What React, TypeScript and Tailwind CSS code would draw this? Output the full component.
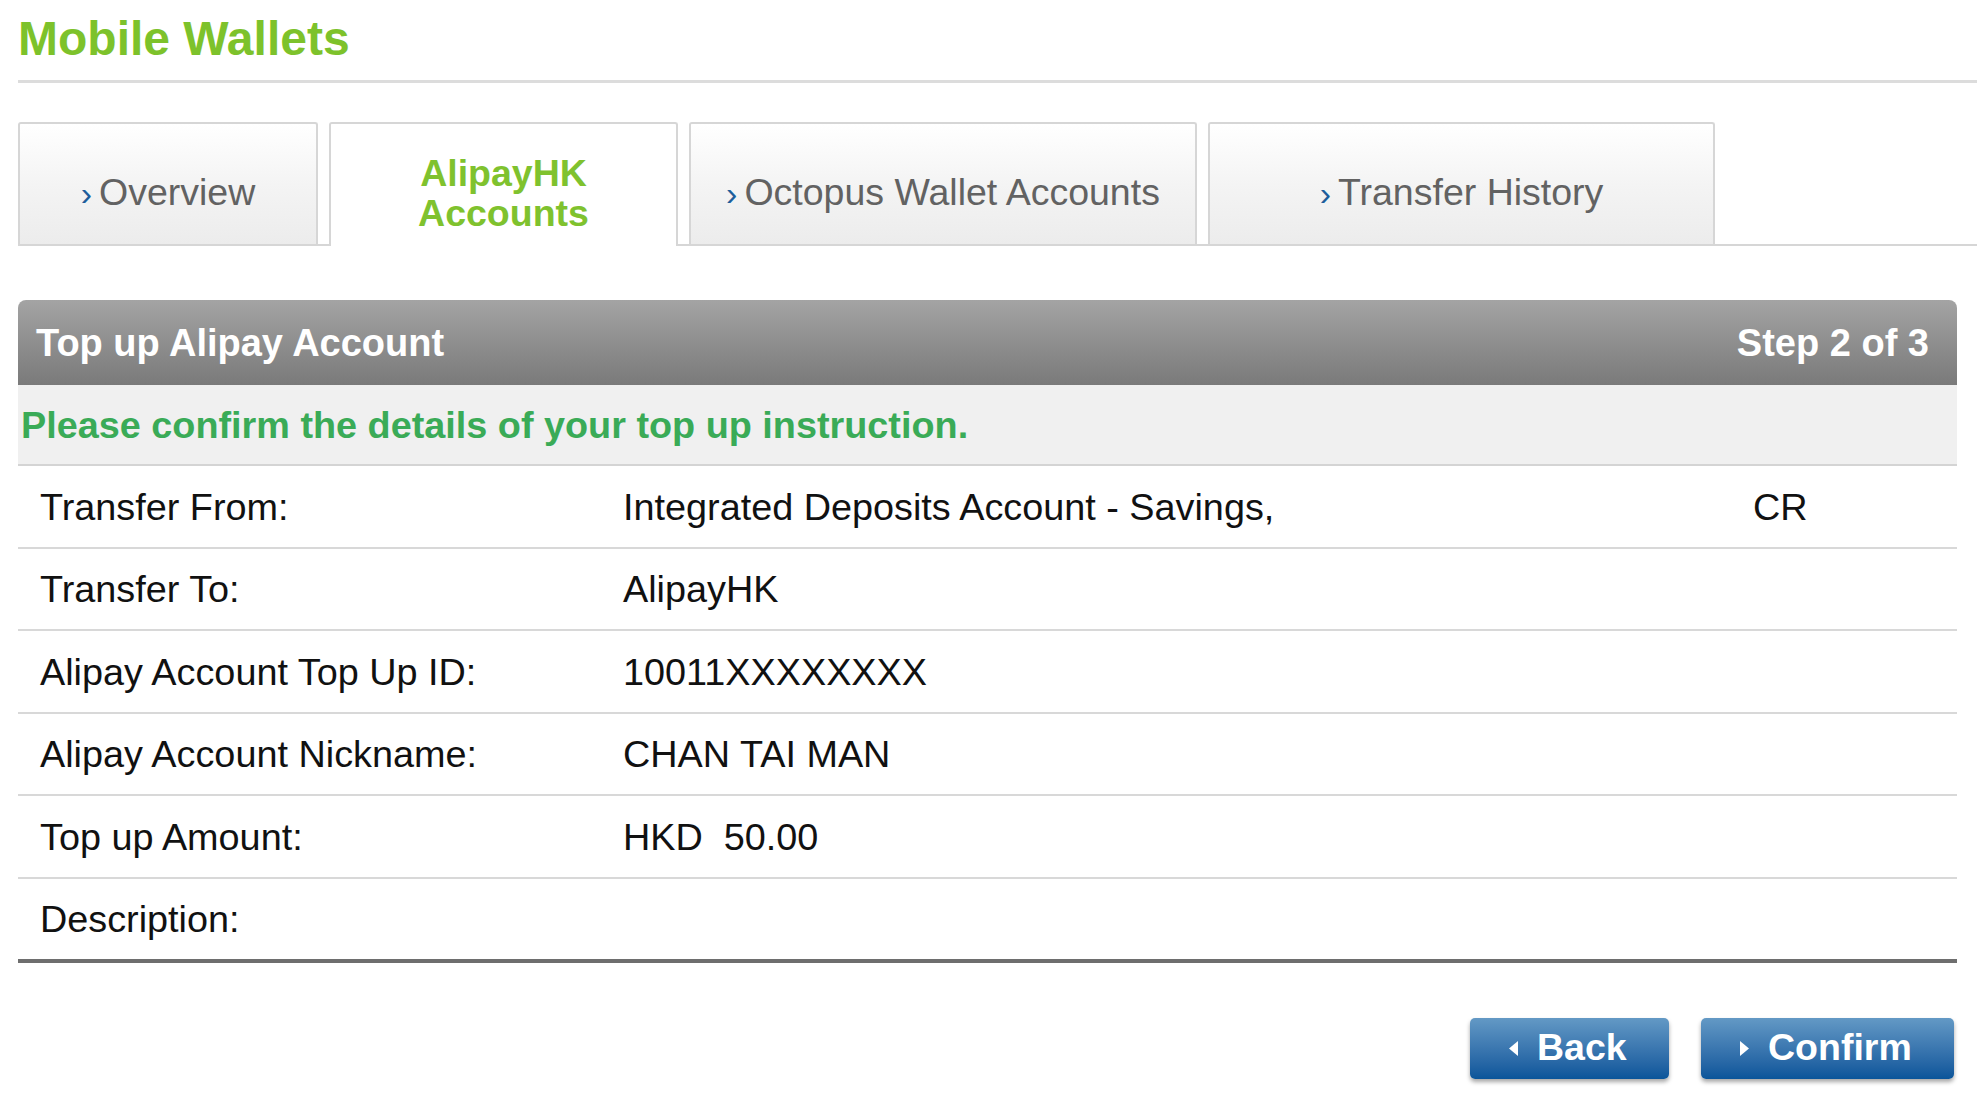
import React from 'react';

interface DetailRow {
  label: string;
  value: string;
  extra?: string;
}

const rows: DetailRow[] = [
  { label: 'Transfer From:', value: 'Integrated Deposits Account - Savings,', extra: 'CR' },
  { label: 'Transfer To:', value: 'AlipayHK' },
  { label: 'Alipay Account Top Up ID:', value: '10011XXXXXXXX' },
  { label: 'Alipay Account Nickname:', value: 'CHAN TAI MAN' },
  { label: 'Top up Amount:', value: 'HKD\u00a0\u00a050.00' },
  { label: 'Description:', value: '' },
];

const tabs = [
  { label: 'Overview', width: 'w-[300px]' },
  { label: 'AlipayHK Accounts', width: 'w-[349px]', active: true },
  { label: 'Octopus Wallet Accounts', width: 'w-[508px]' },
  { label: 'Transfer History', width: 'w-[507px]' },
];

function Triangle({ dir }: { dir: 'left' | 'right' }) {
  return (
    <svg width="9" height="15" viewBox="0 0 9 15" className="shrink-0">
      {dir === 'left' ? <polygon points="9,0 9,15 0,7.5" fill="#fff" /> : <polygon points="0,0 9,7.5 0,15" fill="#fff" />}
    </svg>
  );
}

function ActionButton({ label, dir, width }: { label: string; dir: 'left' | 'right'; width: string }) {
  return (
    <button
      className={`${width} h-[61px] flex items-center gap-[19px] pl-[39px] rounded-[5px] bg-gradient-to-b from-[#6399c5] to-[#09559a] text-white font-bold text-[37.5px] leading-none shadow-[0_3px_4px_rgba(0,0,0,0.35)]`}
    >
      <Triangle dir={dir} />
      <span>{label}</span>
    </button>
  );
}

export default function App() {
  return (
    <div className="min-h-screen bg-white pl-[18px] font-['Liberation_Sans',Arial,sans-serif]">
      {/* Page title */}
      <h1 className="pt-[11px] pb-[13px] text-[48px] leading-[56px] font-bold text-[#7dc22b] border-b-[3px] border-[#dcdcdc]">
        Mobile Wallets
      </h1>

      {/* Tabs */}
      <div className="mt-[41px] flex items-end gap-[11px] border-b-2 border-[#d6d6d6] h-[122px]">
        {tabs.map((tab) =>
          tab.active ? (
            <div
              key={tab.label}
              className={`${tab.width} h-[124px] -mb-[2px] bg-white border-2 border-b-0 border-[#d6d6d6] rounded-t-[3px] flex flex-col items-center justify-center pt-[16px] text-[37.5px] leading-[40px] font-bold text-[#7fc22e]`}
            >
              <span>AlipayHK</span>
              <span>Accounts</span>
            </div>
          ) : (
            <div
              key={tab.label}
              className={`${tab.width} h-[122px] bg-gradient-to-b from-white via-[#f4f4f4] to-[#ececec] border-2 border-b-0 border-[#d6d6d6] rounded-t-[3px] flex items-center justify-center pt-[17px] text-[37.5px] leading-none text-[#626262]`}
            >
              <span className="text-[#1d5e9c] mr-[7px] text-[34px]">›</span>
              <span>{tab.label}</span>
            </div>
          )
        )}
      </div>

      {/* Confirmation panel */}
      <div className="mt-[54px] mr-[20px]">
        <div className="h-[85px] rounded-t-[8px] bg-gradient-to-b from-[#a4a4a4] to-[#7a7a7a] flex items-center justify-between pl-[18px] pr-[28px] text-white font-bold text-[38px] leading-none">
          <span>Top up Alipay Account</span>
          <span>Step 2 of 3</span>
        </div>
        <div className="h-[81px] bg-[#f0f0f0] border-b-2 border-[#d4d4d4] flex items-center pl-[3px] pt-[2px] text-[37.8px] leading-none font-bold text-[#3aab57]">
          Please confirm the details of your top up instruction.
        </div>
        {rows.map((row, i) => (
          <div
            key={row.label}
            className={`grid grid-cols-[583px_1130px_1fr] items-center pl-[22px] pt-[3px] text-[37.8px] leading-none text-[#111] ${
              i === rows.length - 1 ? 'h-[84px] border-b-4 border-[#6e6e6e]' : 'h-[82.5px] border-b-2 border-[#d8d8d8]'
            }`}
          >
            <span>{row.label}</span>
            <span>{row.value}</span>
            <span>{row.extra}</span>
          </div>
        ))}
      </div>

      {/* Actions */}
      <div className="mt-[55px] mr-[23px] flex justify-end gap-[32px]">
        <ActionButton label="Back" dir="left" width="w-[199px]" />
        <ActionButton label="Confirm" dir="right" width="w-[253px]" />
      </div>
    </div>
  );
}
